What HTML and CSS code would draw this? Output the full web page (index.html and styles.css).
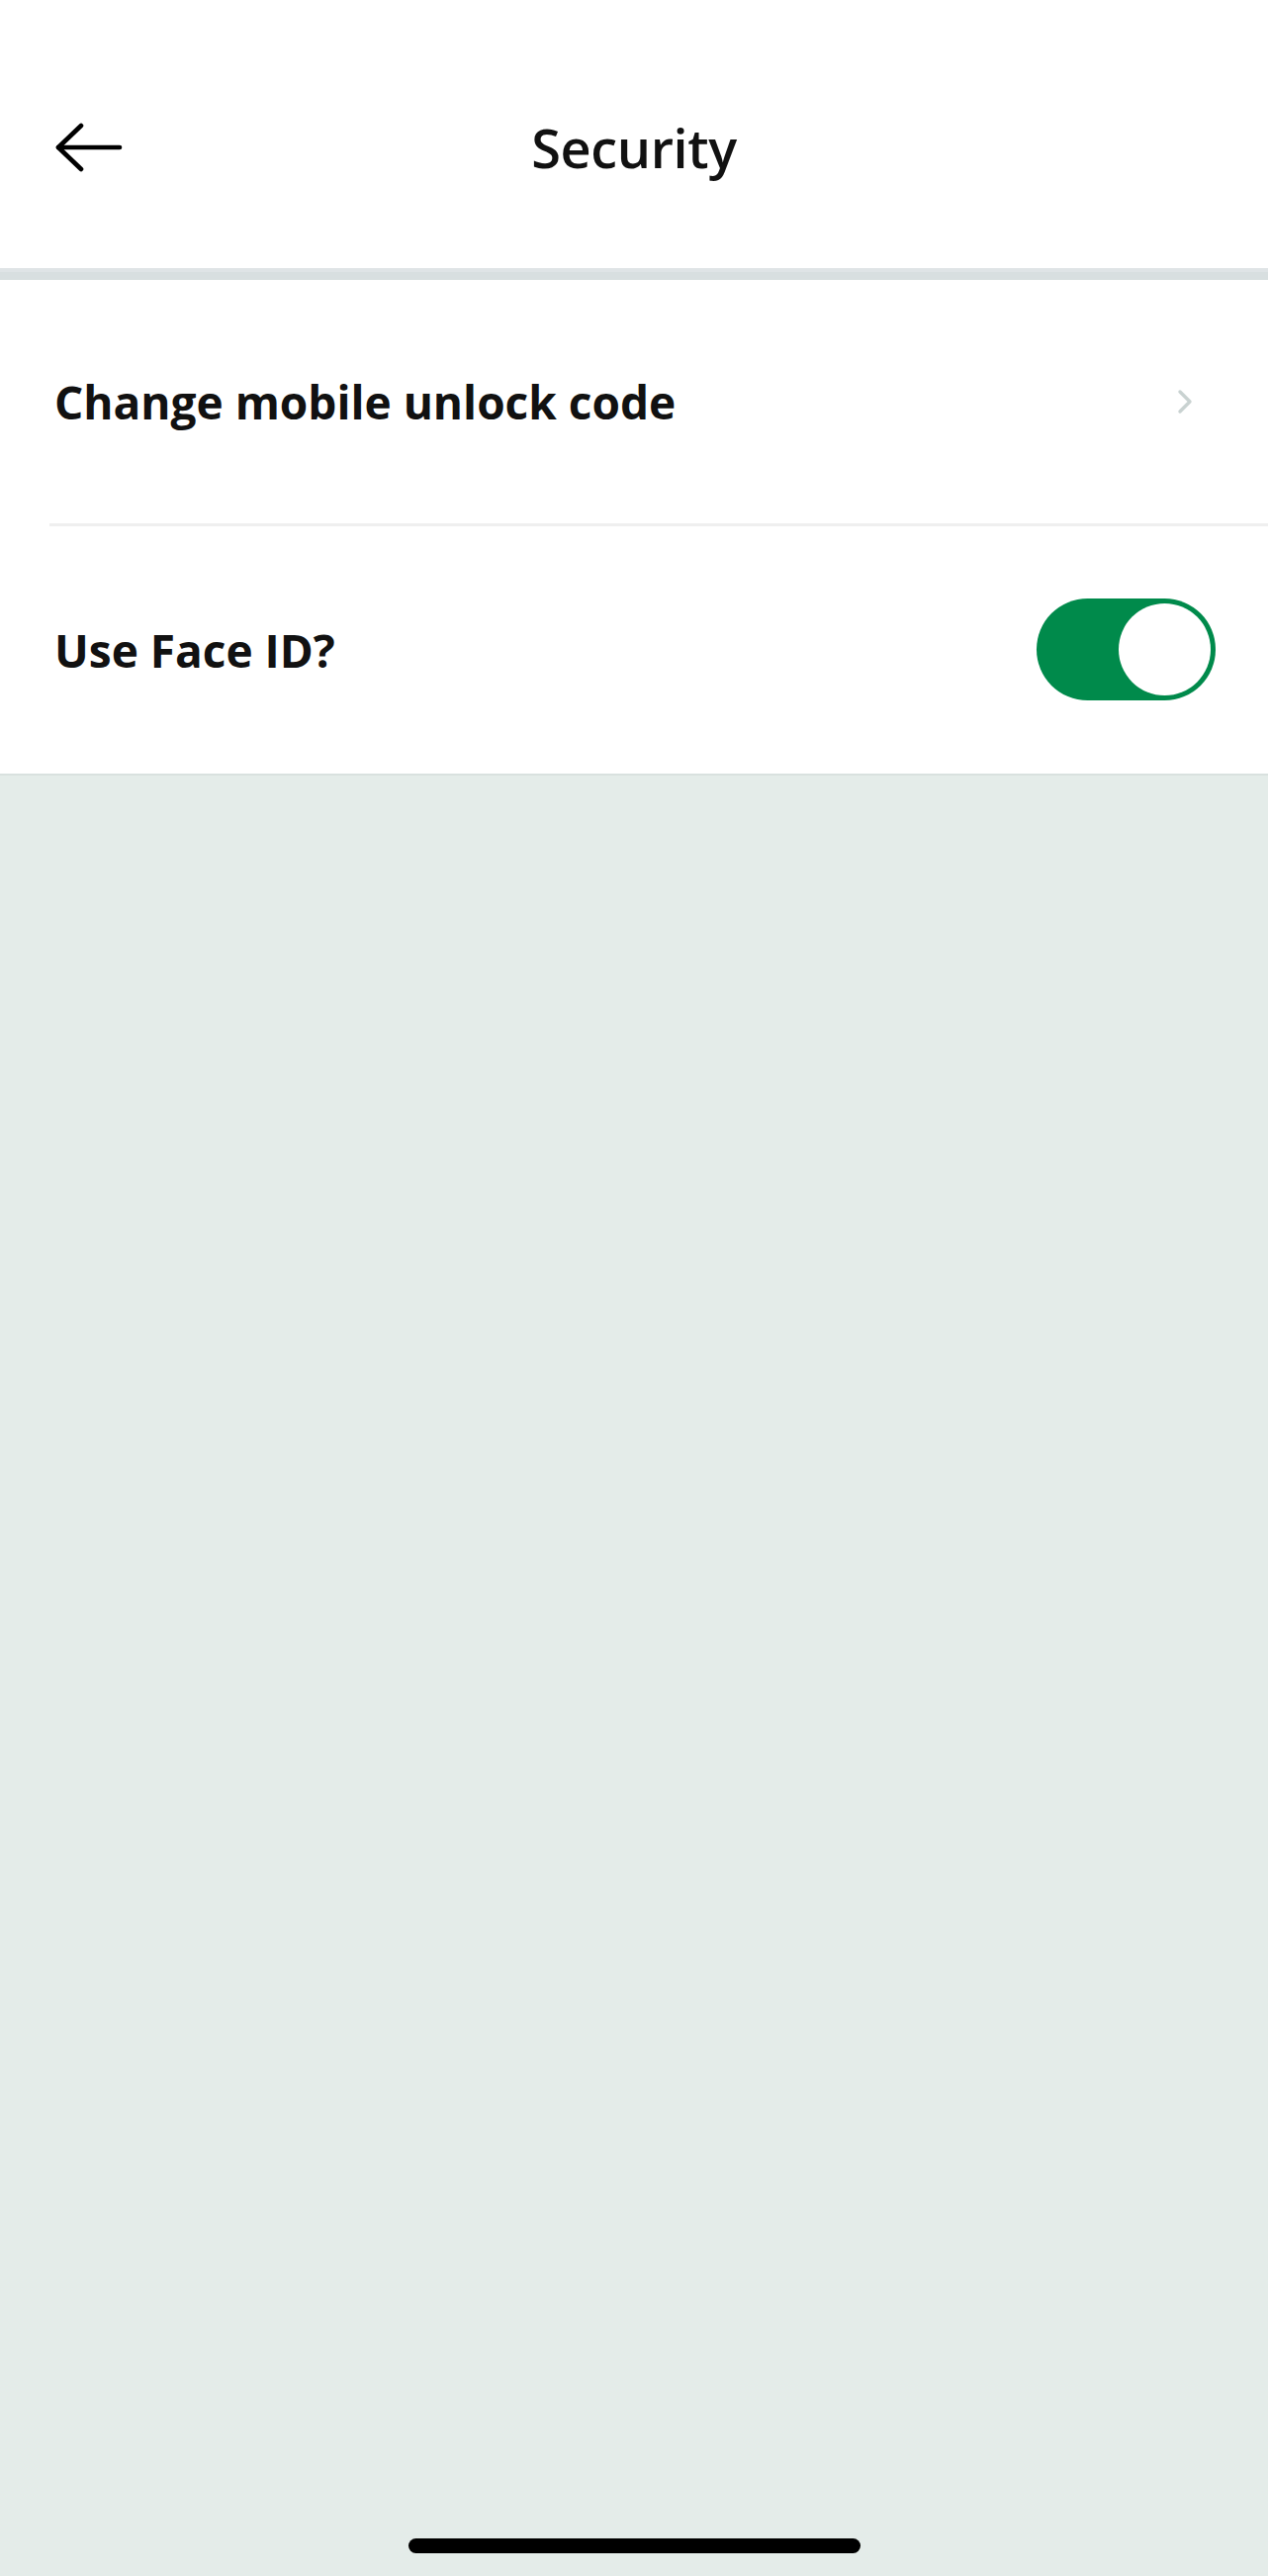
FILE: index.html
```html
<!DOCTYPE html>
<html lang="en">
<head>
<meta charset="utf-8">
<title>Security</title>
<link rel="stylesheet" href="styles.css">
</head>
<body>
<div class="screen">
  <header class="topbar">
    <div class="topbar-left">
      <button class="back" aria-label="Back">
        <svg width="68" height="50" viewBox="0 0 68 50" fill="none" stroke="#000" stroke-width="4.6" stroke-linecap="round" stroke-linejoin="round">
          <path d="M3 25 H65"/>
          <path d="M26 3 L3 25 L26 47"/>
        </svg>
      </button>
    </div>
    <h1 class="title">Security</h1>
    <div class="topbar-right"></div>
  </header>
  <section class="list">
    <div class="row">
      <span class="row-label">Change mobile unlock code</span>
      <svg class="chevron" width="16" height="26" viewBox="0 0 16 26" fill="none" stroke="#c9d2d1" stroke-width="3.4" stroke-linecap="round" stroke-linejoin="round">
        <path d="M3 3 L13 13 L3 23"/>
      </svg>
    </div>
    <div class="divider"></div>
    <div class="row row-toggle">
      <span class="row-label">Use Face ID?</span>
      <div class="toggle is-on" role="switch" aria-checked="true">
        <div class="knob"></div>
      </div>
    </div>
  </section>
  <div class="fill">
    <div class="home-indicator"></div>
  </div>
</div>
</body>
</html>
```

FILE: styles.css
```css
* {
  box-sizing: border-box;
}

html, body {
  margin: 0;
  padding: 0;
}

body {
  font-family: "Open Sans", "Noto Sans", "Liberation Sans", sans-serif;
  color: #111;
  background: #e4ece9;
}

.screen {
  width: 1282px;
  height: 2604px;
  display: flex;
  flex-direction: column;
}

.topbar {
  height: 283px;
  background: #fff;
  padding-top: 22px;
  display: grid;
  grid-template-columns: 1fr auto 1fr;
  align-items: center;
  border-bottom: 8px solid #d8dfe0;
  box-shadow: inset 0 -4px 0 #dfe4e6;
}

.topbar-left {
  padding-left: 56px;
  display: flex;
  align-items: center;
}

.back {
  border: 0;
  background: none;
  padding: 0;
  display: flex;
}

.title {
  margin: 0;
  font-size: 54px;
  font-weight: 600;
  letter-spacing: -0.4px;
  color: #111;
}

.list {
  background: #fff;
  display: flex;
  flex-direction: column;
  border-bottom: 2px solid #d9e1df;
}

.row {
  height: 246px;
  display: flex;
  align-items: center;
  justify-content: space-between;
  padding-left: 55px;
  padding-right: 76px;
}

.row-toggle {
  height: 250px;
  padding-right: 53px;
}

.row-label {
  font-size: 46px;
  font-weight: 700;
  letter-spacing: 0;
  color: #111;
}

.divider {
  height: 3px;
  margin-left: 50px;
  background: #efefef;
}

.toggle {
  width: 181px;
  height: 103px;
  border-radius: 52px;
  background: #008a4b;
  padding: 5px;
  display: flex;
  justify-content: flex-end;
  margin-top: -2px;
}

.knob {
  width: 93px;
  height: 93px;
  border-radius: 50%;
  background: #fff;
}

.fill {
  flex: 1;
  background: #e4ece9;
  display: flex;
  align-items: flex-end;
  justify-content: center;
  padding-bottom: 23px;
}

.home-indicator {
  width: 457px;
  height: 15px;
  border-radius: 8px;
  background: #000;
}
```
